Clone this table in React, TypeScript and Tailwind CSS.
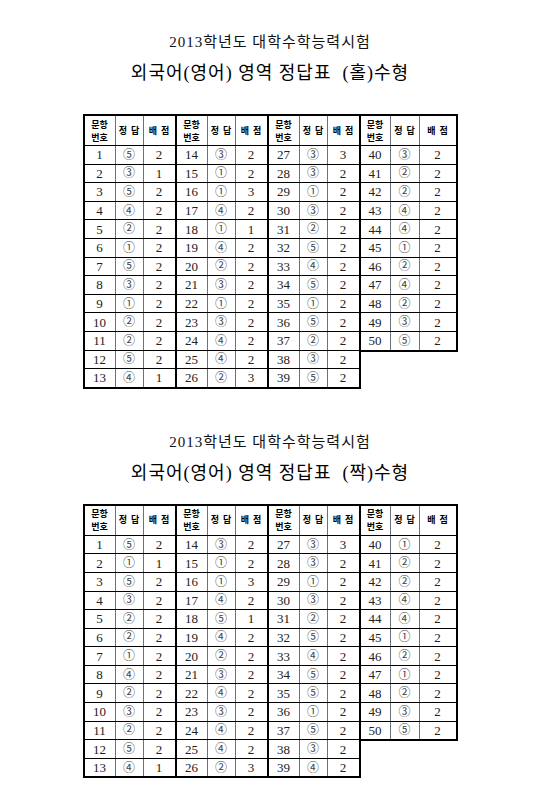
import React from "react";

type Row = [number, string, number];

// answers written as "number:answer:score" strings, one group per column block
function parse(s: string): Row[] {
  return s
    .trim()
    .split(/\s+/)
    .map((t) => {
      const [n, a, p] = t.split(":");
      return [Number(n), a, Number(p)] as Row;
    });
}

const odd: Row[][] = [
  parse("1:⑤:2 2:③:1 3:⑤:2 4:④:2 5:②:2 6:①:2 7:⑤:2 8:③:2 9:①:2 10:②:2 11:②:2 12:⑤:2 13:④:1"),
  parse("14:③:2 15:①:2 16:①:3 17:④:2 18:①:1 19:④:2 20:②:2 21:③:2 22:①:2 23:③:2 24:④:2 25:④:2 26:②:3"),
  parse("27:③:3 28:③:2 29:①:2 30:③:2 31:②:2 32:⑤:2 33:④:2 34:⑤:2 35:①:2 36:⑤:2 37:②:2 38:③:2 39:⑤:2"),
  parse("40:③:2 41:②:2 42:②:2 43:④:2 44:④:2 45:①:2 46:②:2 47:④:2 48:②:2 49:③:2 50:⑤:2"),
];

const even: Row[][] = [
  parse("1:⑤:2 2:①:1 3:⑤:2 4:③:2 5:②:2 6:②:2 7:①:2 8:④:2 9:②:2 10:③:2 11:②:2 12:⑤:2 13:④:1"),
  parse("14:③:2 15:①:2 16:①:3 17:④:2 18:⑤:1 19:④:2 20:②:2 21:③:2 22:④:2 23:③:2 24:④:2 25:④:2 26:②:3"),
  parse("27:③:3 28:③:2 29:①:2 30:③:2 31:②:2 32:⑤:2 33:④:2 34:⑤:2 35:⑤:2 36:①:2 37:⑤:2 38:③:2 39:④:2"),
  parse("40:①:2 41:②:2 42:②:2 43:④:2 44:④:2 45:①:2 46:②:2 47:①:2 48:②:2 49:③:2 50:⑤:2"),
];

const serif = "font-['Liberation_Serif','DejaVu_Serif','Noto_Sans_CJK_KR',serif]";
const kr = "font-['Noto_Sans_CJK_KR',sans-serif]";

function Group({ rows, first, wide }: { rows: Row[]; first?: boolean; wide?: boolean }) {
  const cols = wide ? ["w-[30px]", "w-[29px]", "w-[36px]"] : ["w-[31px]", "w-[28px]", "w-[31px]"];
  return (
    <div className={`flex flex-col self-start border-y-2 border-r-2 border-black ${first ? "border-l-2" : ""}`}>
      <div className={`flex h-[29px] ${kr} text-[9px] font-bold text-black`}>
        <div className={`${cols[0]} flex flex-col items-center justify-center border-r border-gray-500 leading-[13px]`}>
          <span>문항</span>
          <span>번호</span>
        </div>
        <div className={`${cols[1]} flex items-center justify-center whitespace-pre border-r border-gray-500`}>정  답</div>
        <div className={`${cols[2]} flex items-center justify-center whitespace-pre`}>배  점</div>
      </div>
      {rows.map(([n, a, p]) => (
        <div key={n} className={`flex h-[18.6px] border-t border-black ${serif} text-[13px] leading-none text-[#222]`}>
          <div className={`${cols[0]} flex items-center justify-center border-r border-gray-500`}>{n}</div>
          <div className={`${cols[1]} flex items-center justify-center border-r border-gray-500 text-[12px] text-[#444]`}>{a}</div>
          <div className={`${cols[2]} flex items-center justify-center`}>{p}</div>
        </div>
      ))}
    </div>
  );
}

function Sheet({ kind, data, gap }: { kind: string; data: Row[][]; gap: string }) {
  return (
    <section className="flex flex-col items-center">
      <h2 className={`${serif} text-[15px] leading-[20px] tracking-[1px] text-[#111]`}>2013학년도 대학수학능력시험</h2>
      <h1 className={`${serif} mt-[9px] whitespace-pre text-[18px] leading-[24px] tracking-[1px] text-black`}>
        외국어(영어) 영역 정답표  ({kind})수형
      </h1>
      <div className={`${gap} flex`}>
        {data.map((rows, i) => (
          <Group key={i} rows={rows} first={i === 0} wide={i === 3} />
        ))}
      </div>
    </section>
  );
}

export default function App() {
  return (
    <div className="flex min-h-[794px] w-[540px] flex-col bg-white pt-[32px]">
      <Sheet kind="홀" data={odd} gap="mt-[29px]" />
      <div className="h-[43px]" />
      <Sheet kind="짝" data={even} gap="mt-[19px]" />
    </div>
  );
}
